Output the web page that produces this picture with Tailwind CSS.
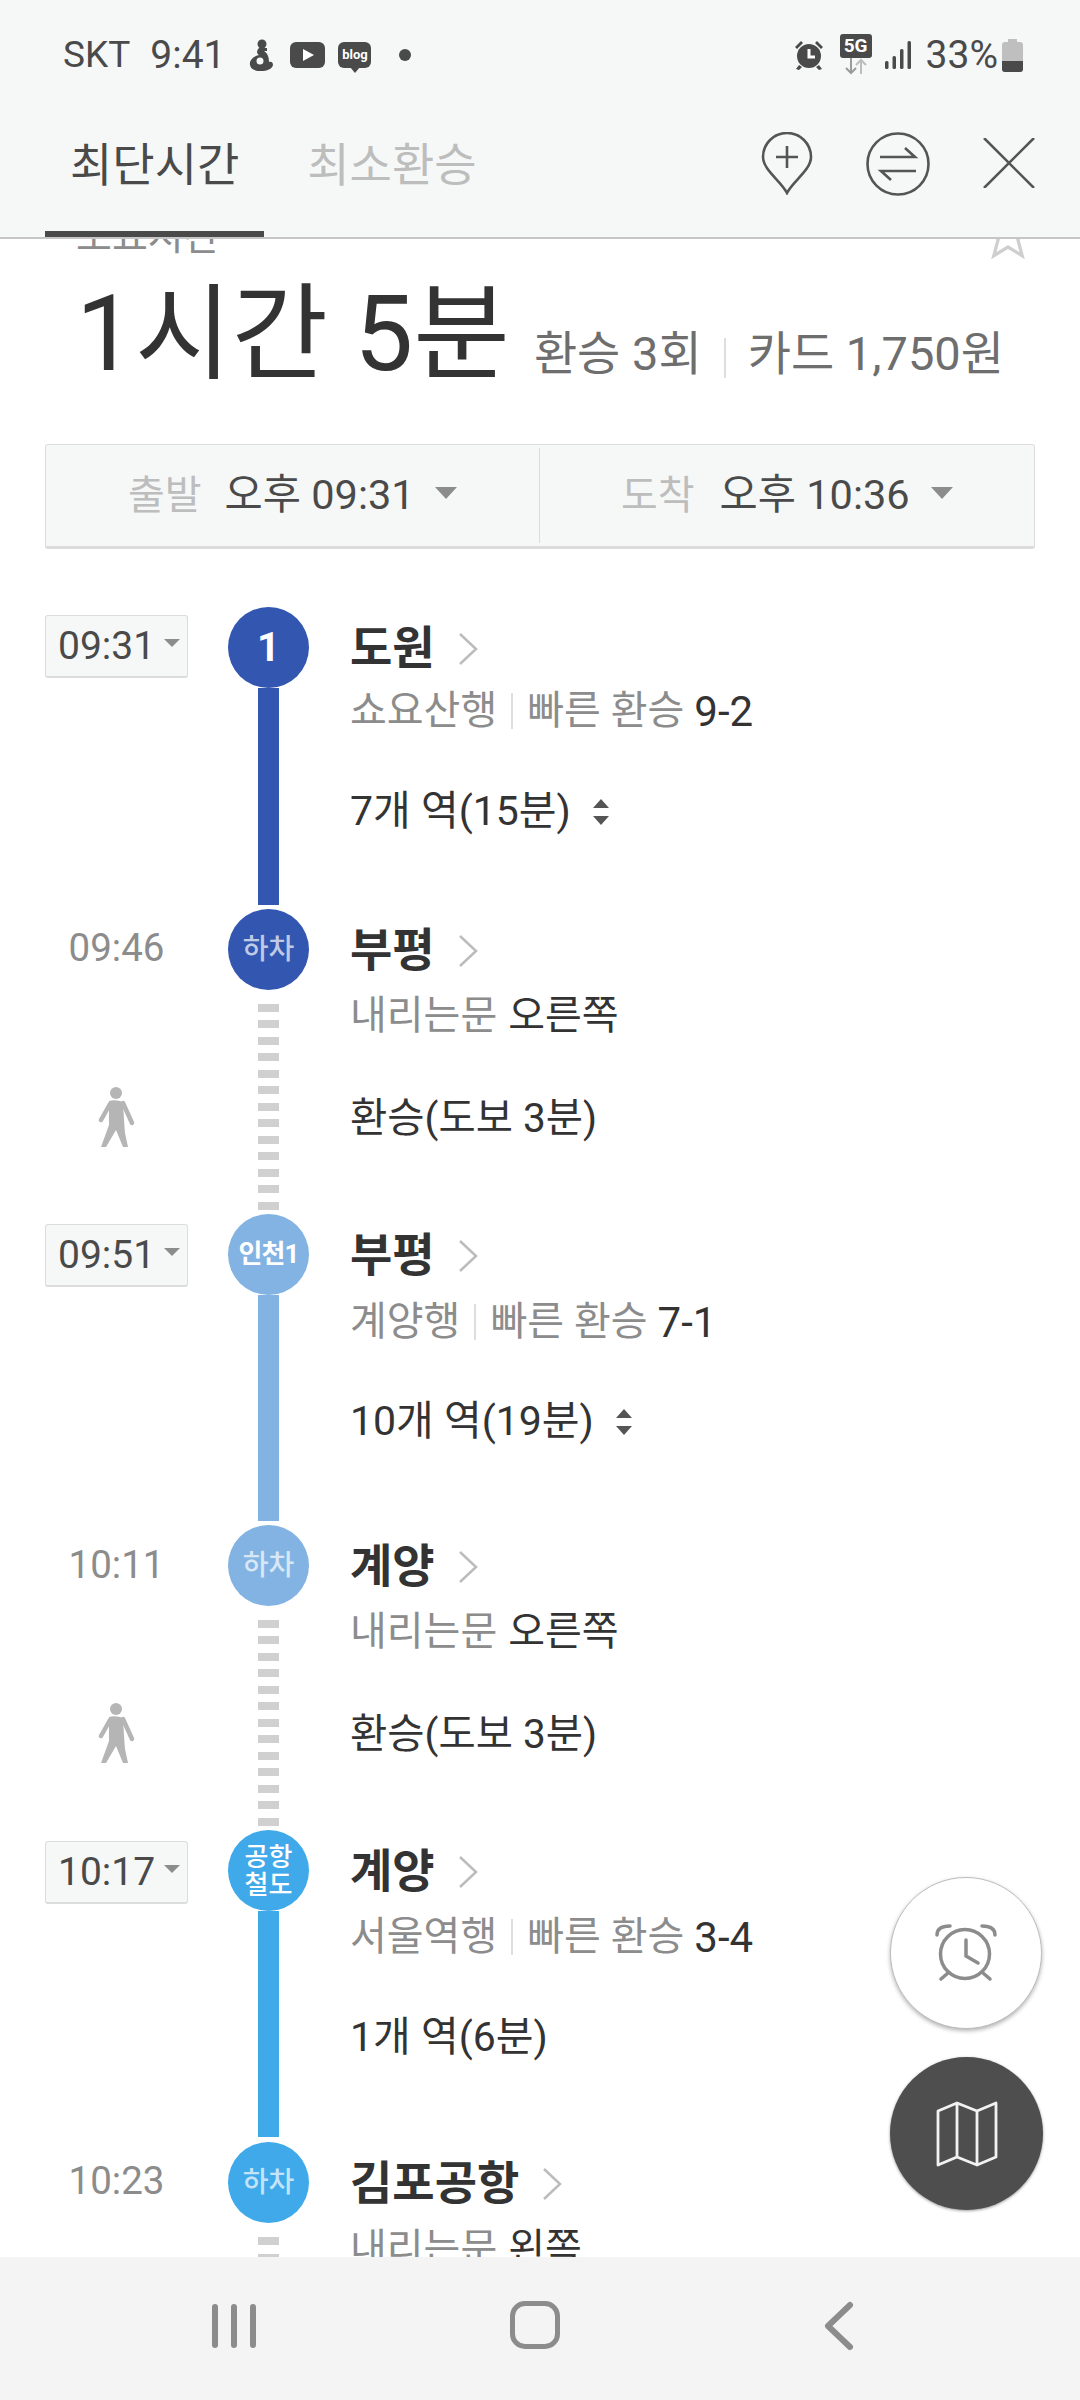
<!doctype html>
<html lang="ko"><head><meta charset="utf-8"><script src="https://cdn.jsdelivr.net/npm/@tailwindcss/browser@4"></script></head>
<body class="m-0 bg-white">
<div class="relative w-[1080px] h-[2400px] overflow-hidden flex flex-col bg-white font-[Roboto,'Noto_Sans_CJK_KR',sans-serif] text-[#333]">

<header class="relative z-10 h-[239px] shrink-0 bg-[#f6f8f8] border-b-2 border-[#c6c6c6]">
  <div class="h-[110px] flex items-center pl-[63px] pr-[57px] text-[39px] text-[#4a4a4a]">
    <span class="text-[37px]">SKT</span><span class="ml-[20px]">9:41</span>
    <svg class="ml-[22px]" width="28" height="32" viewBox="0 0 28 32" fill="#4a4a4a"><circle cx="15" cy="5" r="4.5"/><path d="M12 9c-3 3-2 6 0 7-5 1-10 5-9 10 1 5 6 6 11 6 6 0 11-2 12-6 0-3-2-4-4-3 0-6-2-9-5-11l3 0 0-3z"/><circle cx="13" cy="22" r="3.5" fill="#f6f8f8"/></svg>
    <svg class="ml-[15px]" width="35" height="26" viewBox="0 0 35 26"><rect width="35" height="26" rx="6" fill="#4a4a4a"/><path d="M13 7l11 6-11 6z" fill="#fff"/></svg>
    <span class="relative ml-[13px] w-[33px] h-[26px] rounded-[6px] bg-[#4a4a4a] text-white text-[13px] font-bold leading-[26px] text-center">blog<span class="absolute left-[12px] top-[25px] w-0 h-0 border-x-[5px] border-x-transparent border-t-[6px] border-t-[#4a4a4a]"></span></span>
    <span class="ml-[28px] w-[12px] h-[12px] rounded-full bg-[#4a4a4a]"></span>
    <span class="flex-1"></span>
    <svg width="32" height="32" viewBox="0 0 32 32" fill="#4a4a4a"><circle cx="16" cy="17" r="12"/><path d="M2 8l6-6 2 2-6 6zM30 8l-6-6-2 2 6 6zM6 26l-3 4 3 1 3-3zM26 26l3 4-3 1-3-3z"/><path d="M16 10v8h6" stroke="#fff" stroke-width="3" fill="none"/></svg>
    <span class="relative ml-[15px] w-[32px] h-[38px] self-center -mt-[2px]">
      <span class="absolute left-0 -top-[1px] w-[32px] h-[24px] rounded-[3px] bg-[#4a4a4a] text-white text-[19px] font-bold leading-[24px] text-center">5G</span>
      <svg class="absolute left-[3px] top-[23px]" width="26" height="17" viewBox="0 0 26 17" fill="none" stroke-width="2"><path d="M8 0v15M3 10l5 5 5-5" stroke="#9a9a9a"/><path d="M18 16V2M13 7l5-5 5 5" stroke="#bdbdbd"/></svg>
    </span>
    <svg class="ml-[13px]" width="27" height="30" viewBox="0 0 27 30" fill="#4a4a4a"><rect x="0" y="21" width="3.5" height="8" rx="1.5"/><rect x="7.5" y="16" width="3.5" height="13" rx="1.5"/><rect x="15" y="9" width="3.5" height="20" rx="1.5"/><rect x="22.5" y="1" width="3.5" height="28" rx="1.5"/></svg>
    <span class="ml-[14px]">33%</span>
    <svg class="ml-[4px]" width="21" height="34" viewBox="0 0 21 34"><path d="M6 1h9v3h3a3 3 0 0 1 3 3v24a3 3 0 0 1-3 3H3a3 3 0 0 1-3-3V7a3 3 0 0 1 3-3h3z" fill="#bfbfbf"/><path d="M0 23h21v8a3 3 0 0 1-3 3H3a3 3 0 0 1-3-3z" fill="#4a4a4a"/></svg>
  </div>
  <nav class="relative h-[127px] flex items-start text-[46px] pl-[70px]">
    <span class="mt-[27px] leading-[56px] text-[#4a4a4a]">최단시간</span>
    <span class="mt-[27px] ml-[68px] leading-[56px] text-[#bdbdbd]">최소환승</span>
    <span class="absolute left-[45px] bottom-0 w-[219px] h-[6px] bg-[#4a4a4a]"></span>
    <span class="flex-1"></span>
    <div class="flex items-start pr-[45px] pt-[22px]">
      <svg width="52" height="63" viewBox="0 0 52 63" fill="none" stroke="#555" stroke-width="2.6"><path d="M26 61C20 49 2 38 2 25a24 24 0 0 1 48 0C50 38 32 49 26 61z"/><path d="M26 14v22M15 25h22"/></svg>
      <svg class="ml-[53px]" width="64" height="64" viewBox="0 0 64 64" fill="none" stroke="#555" stroke-width="2.6"><circle cx="32" cy="32" r="30.5"/><path d="M14 25h35l-10-9M50 39H15l10 9"/></svg>
      <svg class="ml-[53px] mt-[6px]" width="52" height="50" viewBox="0 0 52 50" fill="none" stroke="#555" stroke-width="2.6"><path d="M1 0l50 50M51 0L1 50"/></svg>
    </div>
  </nav>
</header>

<main class="flex-1 min-h-0 overflow-hidden -mt-[22px]">
  <div class="relative h-[40px] pl-[76px] text-[39px] leading-[40px] text-[#8c8c8c] mt-0">소요시간
    <svg class="absolute left-[984px] -top-[6px]" width="48" height="48" viewBox="0 0 44 44" fill="none" stroke="#cfcfcf" stroke-width="3"><path d="M22 1l6 14 14 1-11 10 4 15-13-8-13 8 4-15L2 16l14-1z"/></svg>
  </div>
  <div class="flex items-baseline pl-[76px] mt-[17px] h-[122px]">
    <span class="text-[105px] leading-[122px] text-[#333]">1시간 5분</span>
    <span class="ml-[24px] text-[47px] text-[#6e6e6e]">환승 3회</span>
    <span class="ml-[22px] w-[2px] h-[40px] bg-[#dedede] self-end mb-[18px]"></span>
    <span class="ml-[22px] text-[47px] text-[#6e6e6e]">카드 1,750원</span>
  </div>
  <div class="mt-[48px] mx-[45px] h-[105px] flex rounded-[3px] border border-[#dcdcdc] border-b-[3px] bg-[#f6f8f8] text-[41.5px] text-[#4a4a4a]">
    <div class="w-[494px] pl-[82px] flex items-center border-r border-[#dcdcdc] my-[3px]">
      <span class="text-[40px] text-[#bdbdbd]">출발</span><span class="ml-[23px]">오후 09:31</span>
      <span class="ml-[20px] mb-[6px] w-0 h-0 border-x-[11px] border-x-transparent border-t-[12px] border-t-[#8c8c8c]"></span>
    </div>
    <div class="flex-1 pl-[81px] flex items-center my-[3px]">
      <span class="text-[40px] text-[#bdbdbd]">도착</span><span class="ml-[25px]">오후 10:36</span>
      <span class="ml-[21px] mb-[6px] w-0 h-0 border-x-[11px] border-x-transparent border-t-[12px] border-t-[#8c8c8c]"></span>
    </div>
  </div>

  <div class="mt-[58px] pl-[45px]">
    <!-- 도원 -->
    <section class="flex h-[302px]">
      <div class="w-[143px] mr-[40px]">
        <div class="mt-[8px] h-[63px] flex items-center pl-[12px] rounded-[3px] border border-[#dcdcdc] border-b-2 bg-[#f6f8f8] text-[39px] text-[#4a4a4a]">09:31<span class="ml-[9px] mb-[6px] w-0 h-0 border-x-[8px] border-x-transparent border-t-[8px] border-t-[#8c8c8c]"></span></div>
      </div>
      <div class="w-[81px] mr-[41px] flex flex-col items-center pb-[4px]">
        <div class="w-[81px] h-[81px] rounded-full bg-[#3356b0] text-white text-[40px] font-bold flex items-center justify-center">1</div>
        <div class="w-[21px] flex-1 bg-[#3356b0]"></div>
      </div>
      <div class="flex-1">
        <div class="h-[81px] pt-[2px] flex items-center text-[46px] font-bold">도원<svg class="ml-[24px]" width="19" height="32" viewBox="0 0 19 32" fill="none" stroke="#bcbcbc" stroke-width="2.5"><path d="M1 1l16 15L1 31"/></svg></div>
        <div class="h-[46px] flex items-center text-[40px] text-[#8c8c8c]">쇼요산행<span class="ml-[14px] mr-[14px] w-[2px] h-[36px] bg-[#dedede]"></span>빠른 환승<span class="ml-[10px] text-[42px] text-[#333]">9-2</span></div>
        <div class="mt-[55px] h-[46px] flex items-center text-[41px]">7개 역(15분)<svg class="ml-[22px]" width="16" height="26" viewBox="0 0 16 26" fill="#555"><path d="M8 0l8 9H0zM8 26l8-9H0z"/></svg></div>
      </div>
    </section>
    <!-- 부평 하차 -->
    <section class="flex h-[305px]">
      <div class="w-[143px] mr-[40px]">
        <div class="h-[81px] pb-[3px] flex items-center justify-center text-[38.5px] text-[#8c8c8c]">09:46</div>
        <svg class="ml-[52px] mt-[97px]" width="38" height="60" viewBox="0 0 38 60" fill="#b5b5b5"><circle cx="19" cy="6" r="6"/><path d="M12 14Q19 12 26 15L27 33 28 46 31 60H26L19 43 9 60H4L12 38Z"/><path d="M13 17L4 33M26 16L35 36" stroke="#b5b5b5" stroke-width="4.5" stroke-linecap="round"/></svg>
      </div>
      <div class="w-[81px] mr-[41px] flex flex-col items-center">
        <div class="w-[81px] h-[81px] rounded-full bg-[#3356b0] text-white/70 text-[28px] font-medium flex items-center justify-center">하차</div>
        <div class="w-[21px] flex-1 mt-[14px] mb-[1px] bg-[repeating-linear-gradient(to_bottom,#d0d0d0_0,#d0d0d0_8px,transparent_8px,transparent_16.5px)]"></div>
      </div>
      <div class="flex-1">
        <div class="h-[81px] pt-[2px] flex items-center text-[46px] font-bold">부평<svg class="ml-[24px]" width="19" height="32" viewBox="0 0 19 32" fill="none" stroke="#bcbcbc" stroke-width="2.5"><path d="M1 1l16 15L1 31"/></svg></div>
        <div class="h-[46px] mt-[3px] flex items-center text-[40px] text-[#8c8c8c]">내리는문<span class="ml-[11px] text-[#333]">오른쪽</span></div>
        <div class="mt-[56px] h-[46px] flex items-center text-[40.5px]">환승(도보 3분)</div>
      </div>
    </section>
    <!-- 부평 인천1 -->
    <section class="flex h-[311px]">
      <div class="w-[143px] mr-[40px]">
        <div class="mt-[10px] h-[63px] flex items-center pl-[12px] rounded-[3px] border border-[#dcdcdc] border-b-2 bg-[#f6f8f8] text-[39px] text-[#4a4a4a]">09:51<span class="ml-[9px] mb-[6px] w-0 h-0 border-x-[8px] border-x-transparent border-t-[8px] border-t-[#8c8c8c]"></span></div>
      </div>
      <div class="w-[81px] mr-[41px] flex flex-col items-center pb-[4px]">
        <div class="w-[81px] h-[81px] rounded-full bg-[#82b3e2] text-white text-[26px] font-bold flex items-center justify-center tracking-[-1px]">인천1</div>
        <div class="w-[21px] flex-1 bg-[#82b3e2]"></div>
      </div>
      <div class="flex-1">
        <div class="h-[81px] pt-[2px] flex items-center text-[46px] font-bold">부평<svg class="ml-[24px]" width="19" height="32" viewBox="0 0 19 32" fill="none" stroke="#bcbcbc" stroke-width="2.5"><path d="M1 1l16 15L1 31"/></svg></div>
        <div class="h-[46px] mt-[4px] flex items-center text-[40px] text-[#8c8c8c]">계양행<span class="ml-[14px] mr-[14px] w-[2px] h-[36px] bg-[#dedede]"></span>빠른 환승<span class="ml-[10px] text-[42px] text-[#333]">7-1</span></div>
        <div class="mt-[54px] h-[46px] flex items-center text-[41px]">10개 역(19분)<svg class="ml-[22px]" width="16" height="26" viewBox="0 0 16 26" fill="#555"><path d="M8 0l8 9H0zM8 26l8-9H0z"/></svg></div>
      </div>
    </section>
    <!-- 계양 하차 -->
    <section class="flex h-[305px]">
      <div class="w-[143px] mr-[40px]">
        <div class="h-[81px] pb-[2px] flex items-center justify-center text-[38.5px] text-[#8c8c8c]">10:11</div>
        <svg class="ml-[52px] mt-[97px]" width="38" height="60" viewBox="0 0 38 60" fill="#b5b5b5"><circle cx="19" cy="6" r="6"/><path d="M12 14Q19 12 26 15L27 33 28 46 31 60H26L19 43 9 60H4L12 38Z"/><path d="M13 17L4 33M26 16L35 36" stroke="#b5b5b5" stroke-width="4.5" stroke-linecap="round"/></svg>
      </div>
      <div class="w-[81px] mr-[41px] flex flex-col items-center">
        <div class="w-[81px] h-[81px] rounded-full bg-[#82b3e2] text-white/70 text-[28px] font-medium flex items-center justify-center">하차</div>
        <div class="w-[21px] flex-1 mt-[14px] mb-[1px] bg-[repeating-linear-gradient(to_bottom,#d0d0d0_0,#d0d0d0_8px,transparent_8px,transparent_16.5px)]"></div>
      </div>
      <div class="flex-1">
        <div class="h-[81px] pt-[2px] flex items-center text-[46px] font-bold">계양<svg class="ml-[24px]" width="19" height="32" viewBox="0 0 19 32" fill="none" stroke="#bcbcbc" stroke-width="2.5"><path d="M1 1l16 15L1 31"/></svg></div>
        <div class="h-[46px] mt-[3px] flex items-center text-[40px] text-[#8c8c8c]">내리는문<span class="ml-[11px] text-[#333]">오른쪽</span></div>
        <div class="mt-[56px] h-[46px] flex items-center text-[40.5px]">환승(도보 3분)</div>
      </div>
    </section>
    <!-- 계양 공항철도 -->
    <section class="flex h-[312px]">
      <div class="w-[143px] mr-[40px]">
        <div class="mt-[11px] h-[63px] flex items-center pl-[12px] rounded-[3px] border border-[#dcdcdc] border-b-2 bg-[#f6f8f8] text-[39px] text-[#4a4a4a]">10:17<span class="ml-[9px] mb-[6px] w-0 h-0 border-x-[8px] border-x-transparent border-t-[8px] border-t-[#8c8c8c]"></span></div>
      </div>
      <div class="w-[81px] mr-[41px] flex flex-col items-center pb-[5px]">
        <div class="w-[81px] h-[81px] rounded-full bg-[#3fa9ea] text-white text-[26px] leading-[28px] font-medium flex items-center justify-center text-center">공항<br>철도</div>
        <div class="w-[21px] flex-1 bg-[#3fa9ea]"></div>
      </div>
      <div class="flex-1">
        <div class="h-[81px] pt-[2px] flex items-center text-[46px] font-bold">계양<svg class="ml-[24px]" width="19" height="32" viewBox="0 0 19 32" fill="none" stroke="#bcbcbc" stroke-width="2.5"><path d="M1 1l16 15L1 31"/></svg></div>
        <div class="h-[46px] mt-[3px] flex items-center text-[40px] text-[#8c8c8c]">서울역행<span class="ml-[14px] mr-[14px] w-[2px] h-[36px] bg-[#dedede]"></span>빠른 환승<span class="ml-[10px] text-[42px] text-[#333]">3-4</span></div>
        <div class="mt-[55px] h-[46px] flex items-center text-[41px]">1개 역(6분)</div>
      </div>
    </section>
    <!-- 김포공항 하차 -->
    <section class="flex h-[200px]">
      <div class="w-[143px] mr-[40px]">
        <div class="h-[81px] pb-[3px] flex items-center justify-center text-[38.5px] text-[#8c8c8c]">10:23</div>
      </div>
      <div class="w-[81px] mr-[41px] flex flex-col items-center">
        <div class="w-[81px] h-[81px] rounded-full bg-[#3fa9ea] text-white/70 text-[28px] font-medium flex items-center justify-center">하차</div>
        <div class="w-[21px] flex-1 mt-[14px] bg-[repeating-linear-gradient(to_bottom,#d0d0d0_0,#d0d0d0_8px,transparent_8px,transparent_16.5px)]"></div>
      </div>
      <div class="flex-1">
        <div class="h-[81px] pt-[2px] flex items-center text-[46px] font-bold">김포공항<svg class="ml-[24px]" width="19" height="32" viewBox="0 0 19 32" fill="none" stroke="#bcbcbc" stroke-width="2.5"><path d="M1 1l16 15L1 31"/></svg></div>
        <div class="h-[46px] mt-[3px] flex items-center text-[40px] text-[#8c8c8c]">내리는문<span class="ml-[11px] text-[#333]">왼쪽</span></div>
      </div>
    </section>
  </div>
</main>

<footer class="relative z-10 h-[143px] shrink-0 bg-[#f4f4f4] flex items-center">
  <div class="absolute left-[212px] top-[47px] flex gap-[13px]"><span class="w-[6px] h-[44px] rounded-full bg-[#8c8c8c]"></span><span class="w-[6px] h-[44px] rounded-full bg-[#8c8c8c]"></span><span class="w-[6px] h-[44px] rounded-full bg-[#8c8c8c]"></span></div>
  <div class="absolute left-[510px] top-[44px] w-[50px] h-[48px] rounded-[15px] border-[5px] border-[#8c8c8c]"></div>
  <svg class="absolute left-[822px] top-[44px]" width="32" height="50" viewBox="0 0 32 50" fill="none" stroke="#8c8c8c" stroke-width="6" stroke-linecap="round" stroke-linejoin="round"><path d="M28 4L6 25l22 21"/></svg>
</footer>

<button class="absolute z-20 left-[890px] top-[1877px] w-[152px] h-[152px] rounded-full bg-white border border-[#bdbdbd] shadow-[0_2px_4px_rgba(0,0,0,0.3)] flex items-center justify-center">
  <svg width="62" height="60" viewBox="0 0 62 60" fill="none" stroke="#8c8c8c" stroke-width="3.5" stroke-linecap="round"><circle cx="30" cy="31" r="24.5" /><path d="M31 17v16l12 7M2 12C2 6 7 3 15 3M60 12c0-6-5-9-13-9M13 50l-7 6M48 50l7 6"/></svg>
</button>
<button class="absolute z-20 left-[890px] top-[2057px] w-[153px] h-[153px] rounded-full bg-[#4e4e4e] shadow-[0_1px_3px_rgba(0,0,0,0.4)] flex items-center justify-center">
  <svg width="62" height="66" viewBox="0 0 62 66" fill="none" stroke="#f2f2f2" stroke-width="2.8" stroke-linejoin="round"><path d="M2 10L21 2l20 8 19-8v54l-19 8-20-8-19 8zM21 2v54M41 10v54"/></svg>
</button>
</div>
</body></html>
